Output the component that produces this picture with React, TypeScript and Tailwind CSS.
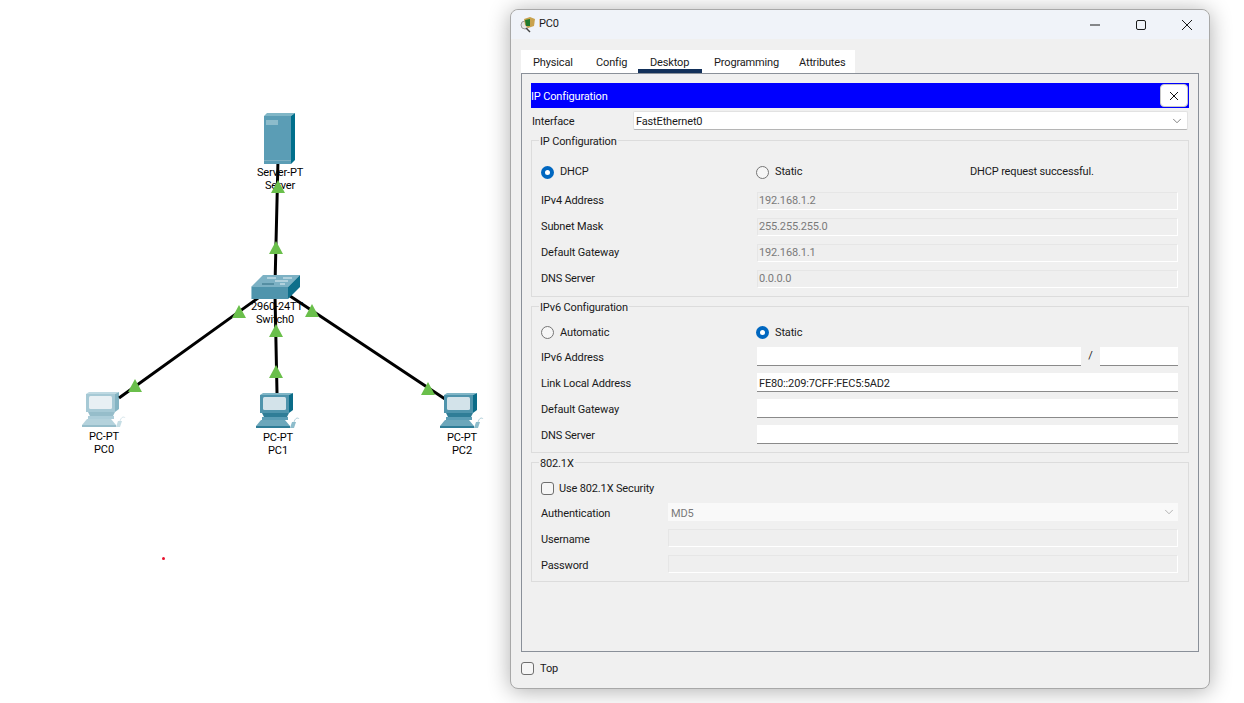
import React from 'react';
import { ChevronDown } from 'lucide-react';

const nodeLabel = "absolute -translate-x-1/2 text-center text-[11px] leading-[13px] text-black whitespace-nowrap";

const PcIcon: React.FC<{ className: string }> = ({ className }) => (
  <svg viewBox="0 0 44 38" width="44" height="38" className={className}>
    <polygon points="4,2 7,0 37,0 33,2" fill="#7fb5c6" />
    <polygon points="33,2 37,0 37,17 33,20" fill="#0b6c88" />
    <rect x="4" y="2" width="29" height="18" fill="#4f94ac" />
    <rect x="7" y="4" width="23" height="13" rx="1.5" fill="#d3e3ea" />
    <polygon points="6,20 33,20 31,24 8,24" fill="#2f7d97" />
    <rect x="6" y="24" width="26" height="3" fill="#5b9db5" />
    <polygon points="5,27 29,27 34,33 0,33" fill="#6ca7bb" />
    <rect x="0" y="33" width="34" height="2" fill="#2f7d97" />
    <polygon points="36,29 40,29 38,35 34,35" fill="#8dbccb" />
    <path d="M38 29 C39 25 42 24 43 26" fill="none" stroke="#b6d2dc" strokeWidth="1" />
  </svg>
);

const ServerIcon: React.FC = () => (
  <svg viewBox="0 0 31 51" width="31" height="51" className="absolute left-[264px] top-[113px]">
    <polygon points="0,3 3,0 31,0 27,3" fill="#80b6c6" />
    <polygon points="27,3 31,0 31,47 27,51" fill="#006f8c" />
    <rect x="0" y="3" width="27" height="48" fill="#5b9db5" />
    <rect x="2" y="7" width="12" height="5" fill="#8dbccb" />
    <rect x="0" y="47" width="27" height="1" fill="#7fb0c2" />
  </svg>
);

const SwitchIcon: React.FC = () => (
  <svg viewBox="0 0 49 24" width="49" height="24" className="absolute left-[251px] top-[275px]">
    <polygon points="0,12 12,0 49,0 37,12" fill="#7cb1c4" />
    <polygon points="37,12 49,0 49,12 37,24" fill="#0e6f8b" />
    <rect x="0" y="12" width="37" height="12" fill="#4f94ac" />
    <rect x="0" y="12" width="1" height="12" fill="#9cc5d3" />
    <path d="M16 3 H25 M32 3 H41 M31 6 H37 M24 6 H31 M29 9 H34" stroke="#e6f1f5" strokeWidth="1" />
    <path d="M11 9 H23" stroke="#2f6d82" strokeWidth="1" />
  </svg>
);

const triangles = [
  [278, 180], [276, 241], [239, 305], [312, 304], [276, 324], [276, 365], [135, 379], [428, 382],
];

const Radio: React.FC<{ on?: boolean }> = ({ on }) =>
  on ? (
    <span className="flex h-[13px] w-[13px] items-center justify-center rounded-full bg-[#0067c0]">
      <span className="h-[5px] w-[5px] rounded-full bg-white" />
    </span>
  ) : (
    <span className="h-[13px] w-[13px] rounded-full border border-[#757575] bg-[#f6f6f6]" />
  );

const Check: React.FC = () => (
  <span className="h-[13px] w-[13px] rounded-[3px] border border-[#6f6f6f] bg-[#f6f6f6]" />
);

const Box: React.FC<{ title: string; className: string; children: React.ReactNode }> = ({ title, className, children }) => (
  <fieldset className={`border border-[#dcdcdc] pl-[9px] pr-[10px] ${className}`}>
    <legend className="-ml-[2px] px-[1px] pt-[1px] leading-[14px]">
      <span className="block translate-y-[1px]">{title}</span>
    </legend>
    {children}
  </fieldset>
);

const ReadOnlyInput: React.FC<{ value?: string; className?: string }> = ({ value, className = 'flex-1' }) => (
  <div className={`h-[18px] border border-[#e6e6e6] border-b-white border-r-white bg-[#efefef] pl-[1px] leading-[15px] text-[#7a7a7a] ${className}`}>
    {value}
  </div>
);

const EditInput: React.FC<{ value?: string; className?: string }> = ({ value, className = 'flex-1' }) => (
  <div className={`h-[19px] border-b border-b-[#8a8a8a] bg-white pl-[2px] leading-[21px] text-[#222] ${className}`}>
    {value}
  </div>
);

const Row: React.FC<{ label: string; width: string; children: React.ReactNode }> = ({ label, width, children }) => (
  <div className="flex items-center">
    <span className={width}>{label}</span>
    {children}
  </div>
);

const App: React.FC = () => (
  <div className="relative h-[703px] w-[1244px] overflow-hidden bg-white font-['Roboto',Arial,sans-serif] text-[11px] tracking-[-0.15px] text-[#1a1a1a]">
    {/* network canvas */}
    <div className={`${nodeLabel} left-[280px] top-[166px]`}>Server-PT<br />Server</div>
    <div className={`${nodeLabel} left-[277px] top-[300px]`}>2960-24TT<br /><span className="inline-block -translate-x-[2px]">Switch0</span></div>
    <div className={`${nodeLabel} left-[104px] top-[430px]`}>PC-PT<br />PC0</div>
    <div className={`${nodeLabel} left-[278px] top-[431px]`}>PC-PT<br />PC1</div>
    <div className={`${nodeLabel} left-[462px] top-[431px]`}>PC-PT<br />PC2</div>

    <svg width="510" height="703" className="absolute left-0 top-0">
      <path d="M278 160 L275 285 M277 393 L275 295 M119 398 L272 288 M445 399 L278 288" stroke="#000" strokeWidth="3" fill="none" />
      {triangles.map(([x, y]) => (
        <polygon key={`${x}-${y}`} points={`${x},${y} ${x + 7},${y + 13} ${x - 7},${y + 13}`} fill="#6abf4b" />
      ))}
    </svg>

    <ServerIcon />
    <SwitchIcon />
    <PcIcon className="absolute left-[82px] top-[392px] opacity-50" />
    <PcIcon className="absolute left-[256px] top-[393px]" />
    <PcIcon className="absolute left-[440px] top-[393px]" />
    <div className="absolute left-[162px] top-[557px] h-[3px] w-[3px] rounded-full bg-[#e8112d]" />

    {/* PC0 window */}
    <div className="absolute left-[510px] top-[9px] flex h-[680px] w-[700px] flex-col rounded-[8px] border border-[#a8a8a8] bg-[#f0f0f0] shadow-[0_2px_22px_rgba(0,0,0,0.32)]">
      <div className="flex h-[29px] shrink-0 items-center rounded-t-[8px] bg-[#f0f3f9] pl-[9px]">
        <svg viewBox="0 0 16 17" width="16" height="17">
          <circle cx="5" cy="9" r="4" fill="#e6e6e6" stroke="#9a9a9a" />
          <path d="M6 12 L10 16" stroke="#444" strokeWidth="1.5" />
          <polygon points="4,3 10,1 15,3 14,10 8,12 5,9" fill="#c9a24e" />
          <polygon points="5,4 10,3 10,10 6,10" fill="#1f7a2e" />
        </svg>
        <span className="ml-[3px]">PC0</span>
        <div className="ml-auto flex items-center">
          <svg width="12" height="12" viewBox="0 0 12 12" className="mr-[34px]"><path d="M1 6 H11" stroke="#1a1a1a" strokeWidth="1" /></svg>
          <svg width="12" height="12" viewBox="0 0 12 12" className="mr-[34px]"><rect x="1.5" y="1.5" width="9" height="9" rx="1.5" fill="none" stroke="#1a1a1a" /></svg>
          <svg width="12" height="12" viewBox="0 0 12 12" className="mr-[16px]"><path d="M1 1 L11 11 M11 1 L1 11" stroke="#1a1a1a" strokeWidth="1" /></svg>
        </div>
      </div>

      <div className="ml-[10px] mt-[11px] flex h-[23px] w-[334px] shrink-0 bg-white">
        <div className="w-[63px] pl-[12px] leading-[26px]">Physical</div>
        <div className="w-[54px] pl-[12px] leading-[26px]">Config</div>
        <div className="w-[64px] border-b-[4px] border-[#12305a] pl-[12px] leading-[26px]">Desktop</div>
        <div className="w-[85px] pl-[12px] leading-[26px]">Programming</div>
        <div className="w-[68px] pl-[12px] leading-[26px]">Attributes</div>
      </div>

      <div className="ml-[10px] h-[579px] w-[678px] shrink-0 border border-[#8a9099] px-[9px] pt-[9px]">
        <div className="flex h-[25px] w-[658px] items-center justify-between bg-[#0000ff] pr-[1px] text-white">
          <span className="translate-y-[2px]">IP Configuration</span>
          <div className="flex h-[23px] w-[28px] items-center justify-center rounded-[4px] border border-[#c8c8c8] bg-white">
            <svg width="10" height="10" viewBox="0 0 10 10"><path d="M1 1 L9 9 M9 1 L1 9" stroke="#111" strokeWidth="1" /></svg>
          </div>
        </div>

        <div className="mt-[3px] flex h-[19px] w-[657px] items-center">
          <span className="w-[102px] translate-y-[2px] pl-[1px]">Interface</span>
          <div className="flex h-[19px] flex-1 items-center justify-between rounded-[2px] border border-[#e2e2e2] border-b-[#b5b5b5] bg-white pl-[2px] pr-[3px]">
            <span className="translate-y-[2px]">FastEthernet0</span>
            <ChevronDown size={14} strokeWidth={1.25} className="text-[#555]" />
          </div>
        </div>

        <Box title="IP Configuration" className="mt-[3px] h-[164px]">
          <div className="mt-[16px] flex h-[16px] items-center">
            <div className="flex w-[215px] items-center gap-[6px]"><Radio on /><span>DHCP</span></div>
            <div className="flex w-[214px] items-center gap-[6px]"><Radio /><span>Static</span></div>
            <span>DHCP request successful.</span>
          </div>
          <div className="mt-[12px] flex flex-col gap-[8px]">
            <Row label="IPv4 Address" width="w-[216px]"><ReadOnlyInput value="192.168.1.2" /></Row>
            <Row label="Subnet Mask" width="w-[216px]"><ReadOnlyInput value="255.255.255.0" /></Row>
            <Row label="Default Gateway" width="w-[216px]"><ReadOnlyInput value="192.168.1.1" /></Row>
            <Row label="DNS Server" width="w-[216px]"><ReadOnlyInput value="0.0.0.0" /></Row>
          </div>
        </Box>

        <Box title="IPv6 Configuration" className="mt-[2px] h-[154px]">
          <div className="mt-[10px] flex h-[16px] items-center">
            <div className="flex w-[215px] items-center gap-[6px]"><Radio /><span className="translate-y-[1px]">Automatic</span></div>
            <div className="flex items-center gap-[6px]"><Radio on /><span className="translate-y-[1px]">Static</span></div>
          </div>
          <div className="mt-[7px] flex flex-col gap-[7px]">
            <Row label="IPv6 Address" width="w-[216px] translate-y-[2px]">
              <EditInput className="w-[324px]" />
              <span className="w-[19px] text-center">/</span>
              <EditInput className="w-[78px]" />
            </Row>
            <Row label="Link Local Address" width="w-[216px] translate-y-[2px]"><EditInput value="FE80::209:7CFF:FEC5:5AD2" /></Row>
            <Row label="Default Gateway" width="w-[216px] translate-y-[2px]"><EditInput /></Row>
            <Row label="DNS Server" width="w-[216px] translate-y-[2px]"><EditInput /></Row>
          </div>
        </Box>

        <Box title="802.1X" className="mt-[2px] h-[127px]">
          <div className="mt-[11px] flex h-[14px] items-center gap-[5px]"><Check /><span className="translate-y-[1px]">Use 802.1X Security</span></div>
          <div className="mt-[8px] flex flex-col gap-[8px]">
            <Row label="Authentication" width="w-[127px] translate-y-[2px]">
              <div className="flex h-[18px] flex-1 items-center justify-between bg-[#f9f9f9] pl-[3px] pr-[2px] text-[#7a7a7a]">
                <span className="translate-y-[2px]">MD5</span>
                <ChevronDown size={14} strokeWidth={1.25} className="text-[#999]" />
              </div>
            </Row>
            <Row label="Username" width="w-[127px] translate-y-[2px]"><ReadOnlyInput /></Row>
            <Row label="Password" width="w-[127px] translate-y-[2px]"><ReadOnlyInput /></Row>
          </div>
        </Box>
      </div>

      <div className="ml-[10px] mt-[9px] flex h-[14px] items-center gap-[6px]"><Check /><span className="translate-y-[1px]">Top</span></div>
    </div>
  </div>
);

export default App;
